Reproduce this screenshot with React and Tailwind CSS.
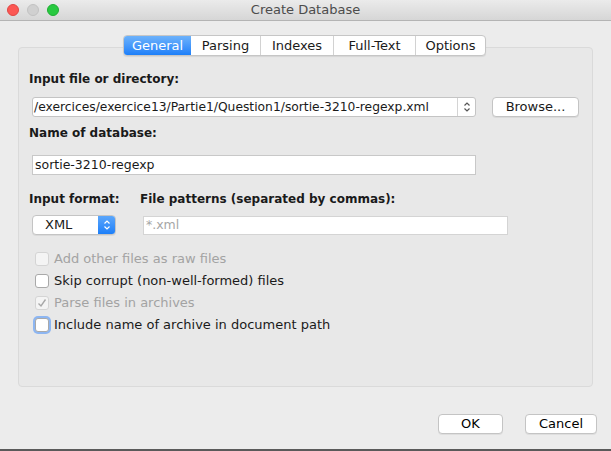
const font = { fontFamily: '"DejaVu Sans", "Liberation Sans", sans-serif' };

function Chevrons({ className }) {
  return (
    <svg width="8" height="12" viewBox="0 0 8 12" className={className} fill="none" stroke="currentColor" strokeWidth="1.2">
      <path d="M1.5 4.5 L4 2 L6.5 4.5" />
      <path d="M1.5 7.5 L4 10 L6.5 7.5" />
    </svg>
  );
}

function Checkbox({ label, checked, disabled, focused }) {
  return (
    <div className="flex items-center h-[22px] pl-[16px]">
      <div
        className={`w-[14px] h-[14px] rounded-[3px] border flex items-center justify-center ${
          disabled ? "border-[#d4d4d4] bg-[#f4f4f4]" : "border-[#a9a9a9] bg-white"
        } ${focused ? "ring-[2px] ring-[#8db6f2] border-[#6a9de6]" : ""}`}
      >
        {checked && (
          <svg width="10" height="10" viewBox="0 0 10 10" fill="none" stroke="#a8a8a8" strokeWidth="1.4">
            <path d="M1.5 5.5 L4 8 L8.5 1.5" />
          </svg>
        )}
      </div>
      <span className={`ml-[5px] text-[13px] ${disabled ? "text-[#a3a3a3]" : "text-[#1a1a1a]"}`}>{label}</span>
    </div>
  );
}

export default function App() {
  const tabs = [
    ["General", "w-[67px]"],
    ["Parsing", "w-[69px]"],
    ["Indexes", "w-[73px]"],
    ["Full-Text", "w-[82px]"],
    ["Options", "w-[70px]"],
  ];
  return (
    <div className="w-[611px] h-[451px] bg-[#ececec] flex flex-col border-b-2 border-[#5a5a5a] overflow-hidden" style={font}>
      {/* title bar */}
      <div className="h-[21px] relative flex items-center justify-center bg-gradient-to-b from-[#ebebeb] to-[#d6d6d6] border-b border-[#b4b4b4] shrink-0">
        <div className="absolute left-[7px] top-[4px] flex gap-[8px]">
          <div className="w-[12px] h-[12px] rounded-full bg-[#fc5753] border border-[#df4744]" />
          <div className="w-[12px] h-[12px] rounded-full bg-[#d0d0d0] border border-[#c2c2c2]" />
          <div className="w-[12px] h-[12px] rounded-full bg-[#28c940] border border-[#1fae33]" />
        </div>
        <span className="text-[13px] text-[#4c4c4c]">Create Database</span>
      </div>

      {/* tabs */}
      <div className="relative z-10 flex justify-center mt-[14px] pr-[2px]">
        <div className="flex h-[21px] rounded-[4px] border border-[#c6c6c6] bg-white shadow-[0_1px_1px_rgba(0,0,0,0.08)] overflow-hidden">
          {tabs.map(([t, w], i) => (
            <div
              key={t}
              className={`${w} flex items-center justify-center text-[13px] ${
                i === 0
                  ? "bg-gradient-to-b from-[#6cb2fb] to-[#1b7ff9] text-white"
                  : "text-[#1a1a1a]"
              } ${i > 1 ? "border-l border-[#d2d2d2]" : ""}`}
            >
              {t}
            </div>
          ))}
        </div>
      </div>

      {/* panel */}
      <div className="mx-[18px] -mt-[9px] h-[340px] rounded-[4px] border border-[#dadada] bg-[#e8e8e8] pt-[23px] text-[#1a1a1a]">
        <div className="pl-[10px] h-[16px] flex items-center text-[12px] font-bold">Input file or directory:</div>
        <div className="flex items-center mt-[10px] pl-[13px]">
          <div className="w-[444px] h-[20px] bg-white border border-[#c4c4c4] rounded-[3px] flex items-center">
            <span className="flex-1 pl-[1px] text-[12.3px] whitespace-nowrap overflow-hidden">
              /exercices/exercice13/Partie1/Question1/sortie-3210-regexp.xml
            </span>
            <div className="w-[18px] h-full border-l border-[#d4d4d4] flex items-center justify-center text-[#555]">
              <Chevrons />
            </div>
          </div>
          <div className="ml-[16px] w-[87px] h-[20px] bg-white border border-[#c4c4c4] rounded-[4px] shadow-[0_1px_0_rgba(0,0,0,0.06)] flex items-center justify-center text-[13px]">
            Browse...
          </div>
        </div>

        <div className="pl-[10px] mt-[8px] h-[16px] flex items-center text-[12px] font-bold">Name of database:</div>
        <div className="pl-[13px] mt-[14px]">
          <div className="w-[444px] h-[20px] bg-white border border-[#c8c8c8] flex items-center pl-[2px] text-[12.5px]">
            sortie-3210-regexp
          </div>
        </div>

        <div className="flex mt-[16px] h-[16px] items-center text-[12px] font-bold">
          <span className="pl-[10px] w-[121px]">Input format:</span>
          <span>File patterns (separated by commas):</span>
        </div>
        <div className="flex items-center mt-[8px] pl-[13px]">
          <div className="w-[84px] h-[20px] bg-white border border-[#c4c4c4] rounded-[4px] flex overflow-hidden shadow-[0_1px_0_rgba(0,0,0,0.06)]">
            <span className="flex-1 pl-[12px] flex items-center text-[13px]">XML</span>
            <div className="w-[17px] h-full bg-gradient-to-b from-[#5aa6fb] to-[#1b7ff9] flex items-center justify-center text-white">
              <Chevrons />
            </div>
          </div>
          <div className="ml-[27px] w-[365px] h-[19px] bg-white border border-[#d4d4d4] flex items-center pl-[2px] text-[12.5px] text-[#a6a6a6]">
            *.xml
          </div>
        </div>

        <div className="mt-[13px]">
          <Checkbox label="Add other files as raw files" disabled />
          <Checkbox label="Skip corrupt (non-well-formed) files" />
          <Checkbox label="Parse files in archives" checked disabled />
          <Checkbox label="Include name of archive in document path" focused />
        </div>
      </div>

      {/* buttons */}
      <div className="flex justify-end mt-[27px] pr-[14px] gap-[22px]">
        <div className="w-[65px] h-[20px] bg-white border border-[#c4c4c4] rounded-[4px] shadow-[0_1px_0_rgba(0,0,0,0.06)] flex items-center justify-center text-[13px]">
          OK
        </div>
        <div className="w-[72px] h-[20px] bg-white border border-[#c4c4c4] rounded-[4px] shadow-[0_1px_0_rgba(0,0,0,0.06)] flex items-center justify-center text-[13px]">
          Cancel
        </div>
      </div>
    </div>
  );
}
